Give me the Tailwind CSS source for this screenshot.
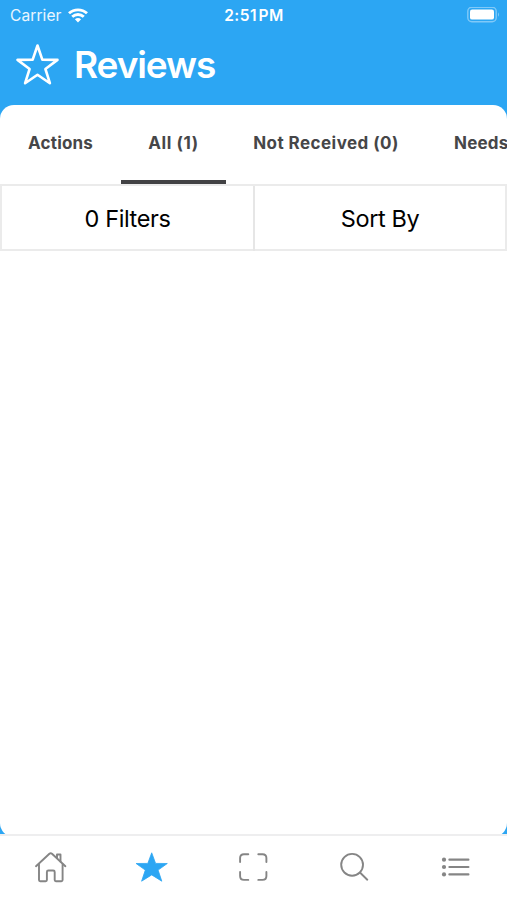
<!DOCTYPE html>
<html lang="en">
<head>
<meta charset="utf-8">
<title>Reviews</title>
<script src="https://cdn.jsdelivr.net/npm/@tailwindcss/browser@4"></script>
</head>
<body class="bg-[#2ca6f3] font-['Inter',sans-serif]">
<div class="flex h-[900px] w-[507px] flex-col overflow-hidden bg-[#2ca6f3]">
  <header class="h-[105px] shrink-0 text-white">
    <div class="grid h-[30px] grid-cols-3 items-center whitespace-nowrap">
      <div class="flex items-center gap-[6px] pl-[10px]">
        <span class="w-[52px] text-[15.5px] leading-[30px] tracking-[0.1px] text-white/90">Carrier</span>
        <svg class="h-[15px] w-[20px]" viewBox="0 0 20 15" fill="none" stroke="white" stroke-width="2.9">
          <path d="M1 5.3C6 .7 14 .7 19 5.3"/><path d="M4.2 8.8C7.6 5.7 12.4 5.7 15.8 8.8"/><path d="M6.9 11.2Q10 8.8 13.1 11.2L10 14.4Z" fill="white" stroke="none"/>
        </svg>
      </div>
      <div class="pl-[1px] text-center text-[15.5px] font-semibold leading-[31px] tracking-[0.5px]">2:51<span class="ml-[1.5px]">PM</span></div>
      <div class="flex justify-end pr-[7px]">
        <svg class="h-[17px] w-[33px]" viewBox="0 0 33 17"><rect x=".8" y=".2" width="28.4" height="14.6" rx="4" fill="none" stroke="white" stroke-opacity=".4" stroke-width="1.4"/><rect x="3" y="2.4" width="24" height="10.2" rx="2.2" fill="white"/><path d="M31 5.2q2 2.3 0 4.6z" fill="white" fill-opacity=".4"/></svg>
      </div>
    </div>
    <div class="flex h-[70px] items-center pl-[15px]">
      <svg class="h-[44px] w-[45px]" viewBox="0 0 45 44" fill="none" stroke="white" stroke-width="2.6" stroke-linejoin="round"><path d="M22.5 2.5L27.3 16.7L42.5 16.9L30.4 26L34.9 40.2L22.5 31.7L10.1 40.2L14.6 26L2.5 16.9L17.7 16.7Z"/></svg>
      <h1 class="ml-[14px] text-[37px] font-semibold leading-[70px] tracking-[-1.1px]">Reviews</h1>
    </div>
  </header>
  <main class="h-[732px] shrink-0 overflow-hidden rounded-[14px] bg-white">
    <nav class="flex h-[79px] whitespace-nowrap text-[17px] font-bold leading-[76px] text-[#464648]">
      <div class="w-[121px] shrink-0 pl-[28px] tracking-[0.2px]">Actions</div>
      <div class="w-[105px] shrink-0 border-b-4 border-[#424244] text-center tracking-[0.6px]">All (1)</div>
      <div class="w-[200px] shrink-0 text-center tracking-[0.45px]">Not Received (0)</div>
      <div class="shrink-0 pl-[28px] tracking-[0.2px]">Needs</div>
    </nav>
    <div class="grid h-[67px] grid-cols-[253px_1fr] border-2 border-[#ebebeb] text-center text-[23.5px] leading-[65px] tracking-[-0.4px] text-black">
      <div class="border-r-2 border-[#e6e6e6]">0 Filters</div>
      <div>Sort By</div>
    </div>
  </main>
  <nav class="relative -mt-[3px] grid h-[66px] shrink-0 grid-cols-5 border-t-2 border-[#eeeeef] bg-white text-[#858585]">
    <svg class="h-[64px] w-full" viewBox="0 0 101 64" fill="none" stroke="currentColor" stroke-width="1.9" stroke-linecap="round" stroke-linejoin="round"><path d="M35.8 30.2L49.2 17.8Q50.5 16.8 51.8 17.8L65.2 30.2"/><path d="M38.8 28.5V44Q38.8 45.2 40 45.2H45.5Q46.7 45.2 46.7 44V36Q46.7 34.5 48.2 34.5H53Q54.5 34.5 54.5 36V44Q54.5 45.2 55.7 45.2H61.2Q62.4 45.2 62.4 44V28.5"/><path d="M56.8 22V18.5H60.3V25.5"/></svg>
    <svg class="h-[64px] w-full" viewBox="0 0 101 64" fill="#2ca6f3" stroke="#2ca6f3" stroke-width=".8" stroke-linejoin="round"><path d="M50.5 16.8L54.4 27.4L66.1 27.5L56.9 34.1L60.6 45.2L50.5 38.9L40.4 45.2L44.1 34.1L34.9 27.5L46.6 27.4Z"/></svg>
    <svg class="h-[64px] w-full" viewBox="0.7 0 101 64" fill="none" stroke="currentColor" stroke-width="1.9" stroke-linecap="round"><path d="M45.8 18.2H41.5Q37.6 18.2 37.6 22V26M55.8 18.2H60Q63.9 18.2 63.9 22V26M37.6 36V40Q37.6 43.9 41.5 43.9H45.8M55.8 43.9H60Q63.9 43.9 63.9 40V36"/></svg>
    <svg class="h-[64px] w-full" viewBox="0.3 0 101 64" fill="none" stroke="currentColor" stroke-width="1.9" stroke-linecap="round"><circle cx="48.2" cy="28.8" r="10.9"/><path d="M56.3 36.8L63.4 43.7"/></svg>
    <svg class="h-[64px] w-full" viewBox="0.6 0 101 64" fill="none" stroke="currentColor" stroke-width="2.2" stroke-linecap="round"><path d="M43.8 23.7H62.8M43.8 31H62.8M43.8 38.4H62.8"/><g fill="currentColor" stroke="none"><circle cx="38.4" cy="23.7" r="2.1"/><circle cx="38.4" cy="31" r="2.1"/><circle cx="38.4" cy="38.4" r="2.1"/></g></svg>
  </nav>
</div>
</body>
</html>
